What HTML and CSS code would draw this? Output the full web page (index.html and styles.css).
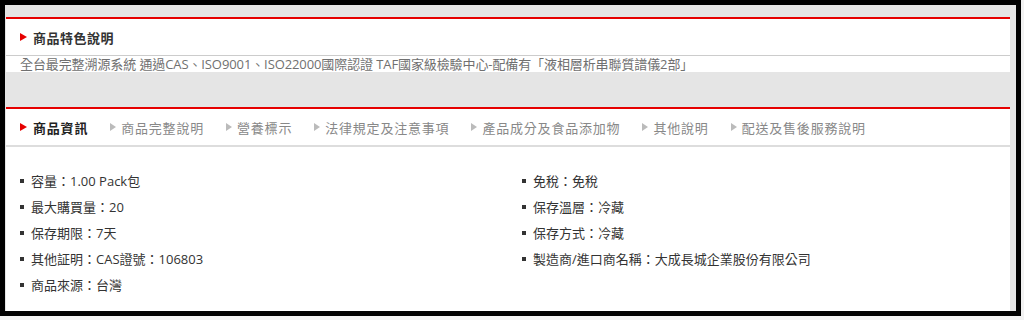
FILE: index.html
```html
<!DOCTYPE html>
<html lang="zh-Hant">
<head>
    <meta charset="UTF-8">
    <title>商品資訊</title>
    <link rel="stylesheet" href="styles.css">
</head>
<body>
    <div class="frame">
        <!-- 商品特色 -->
        <div class="panel">
            <div class="panel-title"><span class="arrow"></span>商品特色說明</div>
            <div class="feature-text">全台最完整溯源系統 通過CAS、ISO9001、ISO22000國際認證 TAF國家級檢驗中心-配備有「液相層析串聯質譜儀2部」</div>
        </div>

        <!-- 商品資訊 tabs -->
        <div class="panel info">
            <ul class="tabs">
                <li class="tab active"><span class="arrow"></span>商品資訊</li>
                <li class="tab"><span class="arrow"></span>商品完整說明</li>
                <li class="tab"><span class="arrow"></span>營養標示</li>
                <li class="tab"><span class="arrow"></span>法律規定及注意事項</li>
                <li class="tab"><span class="arrow"></span>產品成分及食品添加物</li>
                <li class="tab"><span class="arrow"></span>其他說明</li>
                <li class="tab"><span class="arrow"></span>配送及售後服務說明</li>
            </ul>
            <div class="spec">
                <ul class="spec-list">
                    <li>容量：1.00 Pack包</li>
                    <li>最大購買量：20</li>
                    <li>保存期限：7天</li>
                    <li>其他証明：CAS證號：106803</li>
                    <li>商品來源：台灣</li>
                </ul>
                <ul class="spec-list">
                    <li>免稅：免稅</li>
                    <li>保存溫層：冷藏</li>
                    <li>保存方式：冷藏</li>
                    <li>製造商/進口商名稱：大成長城企業股份有限公司</li>
                </ul>
            </div>
        </div>
    </div>
</body>
</html>
```

FILE: styles.css
```css
body {
    margin: 0;
    background-color: #f2f2f2;
    font-family: "Open Sans", "Noto Sans CJK TC", sans-serif;
    font-size: 13px;
    color: #333;
}
.frame {
    width: 1011px;
    height: 294px;
    border: 5px solid #000;
    background-color: #e5e5e5;
    padding-top: 12px;
    overflow: hidden;
    display: flex;
    flex-direction: column;
}
.panel {
    margin-left: 1px;
    width: 1004px;
    background: #fff;
    border-top: 2px solid #e60000;
}
.panel-title {
    height: 36px;
    display: flex;
    align-items: center;
    padding-left: 14px;
    font-weight: bold;
    letter-spacing: 0.5px;
    border-bottom: 1px solid #ccc;
}
.arrow {
    width: 0;
    height: 0;
    border-top: 4px solid transparent;
    border-bottom: 4px solid transparent;
    border-left: 7px solid #e60000;
    margin-right: 6px;
}
.feature-text {
    height: 16px;
    line-height: 16px;
    padding-left: 14px;
    color: #707070;
    letter-spacing: -0.1px;
    white-space: nowrap;
}
.info {
    margin-top: 35px;
    flex: 1;
}
.tabs {
    list-style: none;
    margin: 0;
    padding: 0 0 0 14px;
    height: 36px;
    display: flex;
    align-items: center;
    gap: 22px;
    border-bottom: 2px solid #ddd;
}
.tab {
    display: flex;
    align-items: center;
    color: #888;
    letter-spacing: 0.8px;
}
.tab .arrow {
    border-left: 6px solid #bbb;
    margin-right: 5px;
}
.tab.active {
    color: #222;
    font-weight: bold;
}
.tab.active .arrow {
    border-left: 7px solid #e60000;
    margin-right: 6px;
}
.spec {
    display: grid;
    grid-template-columns: 1fr 1fr;
    padding-top: 21px;
}
.spec-list {
    list-style: none;
    margin: 0;
    padding: 0 0 0 14px;
}
.spec-list li {
    line-height: 26px;
    display: flex;
    align-items: center;
}
.spec-list li::before {
    content: "";
    width: 4px;
    height: 4px;
    background: #333;
    margin-right: 7px;
}
```
